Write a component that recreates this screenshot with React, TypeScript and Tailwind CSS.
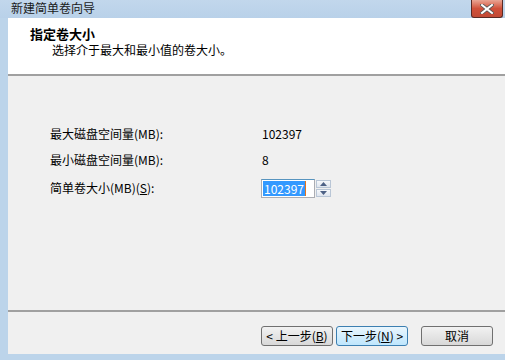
import React from "react";

const FONT = { fontFamily: '"Noto Sans CJK SC", "Liberation Sans", sans-serif' };

function CloseButton() {
  return (
    <div className="flex h-[18px] w-[32px] items-center justify-center rounded-b-[3px] border border-t-0 border-[#5a2a24] bg-gradient-to-b from-[#e8a493] via-[#d0503a] to-[#c14a35]">
      <svg width="14" height="10" viewBox="0 0 14 10">
        <path d="M2 1 L12 9 M12 1 L2 9" stroke="#555" strokeWidth="3.6" strokeLinecap="square" />
        <path d="M2 1 L12 9 M12 1 L2 9" stroke="#fff" strokeWidth="2" strokeLinecap="square" />
      </svg>
    </div>
  );
}

function Spinner() {
  return (
    <div className="ml-[1px] flex flex-col gap-[1px]">
      <div className="flex h-[8px] w-[15px] items-center justify-center border border-[#b9c6d6] bg-gradient-to-b from-[#f6f8fb] to-[#dfe5ee]">
        <svg width="7" height="4" viewBox="0 0 7 4"><path d="M3.5 0 L7 4 L0 4 Z" fill="#4d6185" /></svg>
      </div>
      <div className="flex h-[8px] w-[15px] items-center justify-center border border-[#b9c6d6] bg-gradient-to-b from-[#f6f8fb] to-[#dfe5ee]">
        <svg width="7" height="4" viewBox="0 0 7 4"><path d="M0 0 L7 0 L3.5 4 Z" fill="#4d6185" /></svg>
      </div>
    </div>
  );
}

function Btn({ children, primary }: { children: React.ReactNode; primary?: boolean }) {
  return (
    <div
      className={
        "flex h-[20px] w-[72px] items-center justify-center rounded-[3px] border text-[12px] leading-none text-black " +
        (primary
          ? "border-[#3c7fb1] bg-gradient-to-b from-[#eaf6fd] to-[#bee6fd]"
          : "border-[#707070] bg-gradient-to-b from-[#f2f2f2] to-[#d8d8d8]")
      }
    >
      {children}
    </div>
  );
}

export default function App() {
  return (
    <div className="flex h-[360px] w-[505px] flex-col overflow-hidden bg-[#bcd4ea] text-black" style={FONT}>
      {/* title bar */}
      <div className="flex h-[18px] items-start justify-between bg-gradient-to-b from-[#c2d7ec] to-[#b9d1e9]">
        <span className="pl-[11px] pt-[1px] text-[12px] leading-[14px] text-[#1a1a1a]">新建简单卷向导</span>
        <div className="mr-[2px]">
          <CloseButton />
        </div>
      </div>

      {/* client */}
      <div className="ml-[8px] flex h-[336px] flex-col bg-[#f0f0f0]">
        <div className="flex h-[58px] flex-col border-b-2 border-[#a0a0a0] bg-white pl-[22px] pt-[8px]">
          <span className="text-[13px] font-bold leading-[16px]">指定卷大小</span>
          <span className="pl-[22px] text-[12px] leading-[15px]">选择介于最大和最小值的卷大小。</span>
        </div>

        <div className="flex h-[236px] flex-col border-b-2 border-[#a0a0a0] pl-[42px] pt-[45px] text-[12px] leading-[14px]">
          <div className="flex h-[26px] items-center">
            <span className="w-[212px]">最大磁盘空间量(MB):</span>
            <span>102397</span>
          </div>
          <div className="flex h-[26px] items-center">
            <span className="w-[212px]">最小磁盘空间量(MB):</span>
            <span>8</span>
          </div>
          <div className="mt-[2px] flex h-[26px] items-center">
            <span className="w-[211px]">
              简单卷大小(MB)(<span className="underline">S</span>):
            </span>
            <div className="flex items-center">
              <div className="flex h-[19px] w-[54px] items-center border border-[#abadb3] border-t-[#5794bf] bg-white pl-[1px]">
                <span className="bg-[#3399ff] px-[1px] leading-[15px] text-white">102397</span>
                <span className="h-[15px] w-[1px] bg-[#e8741a]" />
              </div>
              <Spinner />
            </div>
          </div>
        </div>

        <div className="flex flex-1 items-start pl-[253px] pt-[14px]">
          <Btn>&lt; 上一步(<span className="underline">B</span>)</Btn>
          <div className="ml-[3px]">
            <Btn primary>
              下一步(<span className="underline">N</span>) &gt;
            </Btn>
          </div>
          <div className="ml-[13px]">
            <Btn>取消</Btn>
          </div>
        </div>
      </div>
    </div>
  );
}
